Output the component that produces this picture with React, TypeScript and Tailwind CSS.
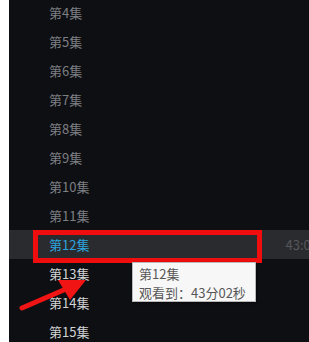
import React from "react";

const episodes = [4, 5, 6, 7, 8, 9, 10, 11, 12, 13, 14, 15];
const current = 12;

const App = () => {
  return (
    <div
      className="w-[309px] h-[342px] flex overflow-hidden relative bg-white"
      style={{ fontFamily: '"Noto Sans CJK SC", "Noto Sans", sans-serif' }}
    >
      <div className="w-[9px] shrink-0 bg-white" />
      <div className="flex-1 bg-[#0e0f13] overflow-hidden">
        <div className="flex flex-col mt-[-2px]">
          {episodes.map((n) => (
            <div
              key={n}
              className={`h-[29px] shrink-0 flex items-center justify-between pl-[40px] text-[13px] ${
                n === current ? "bg-[#2a2b2e]" : ""
              }`}
            >
              <span
                className={
                  n === current
                    ? "text-[#2ba3dd]"
                    : n > current
                    ? "text-[#d2d3d5]"
                    : "text-[#7d7f83]"
                }
              >
                第{n}集
              </span>
              {n === current && (
                <span className="text-[#55575b] whitespace-nowrap mr-[-9px]">43:02</span>
              )}
            </div>
          ))}
        </div>
      </div>

      {/* annotation box */}
      <div className="absolute left-[33px] top-[230px] w-[229px] h-[33px] border-[5px] border-[#f00d0d]" />

      {/* tooltip */}
      <div className="absolute left-[132px] top-[262px] w-[124px] h-[40px] bg-[#f7f7f7] border border-[#b9b9b9] shadow-[1px_1px_2px_rgba(0,0,0,0.5)] px-[6px] pt-[1px] text-[13px] leading-[19px] text-[#575757]">
        <div>第12集</div>
        <div className="whitespace-nowrap">观看到：43分02秒</div>
      </div>

      {/* red arrow */}
      <svg className="absolute left-0 top-0" width="309" height="342" viewBox="0 0 309 342">
        <line x1="22" y1="308" x2="66" y2="289" stroke="#f01414" strokeWidth="5" strokeLinecap="round" />
        <polygon points="86,280 58,280 70,300" fill="#f01414" />
      </svg>
    </div>
  );
};

export default App;
